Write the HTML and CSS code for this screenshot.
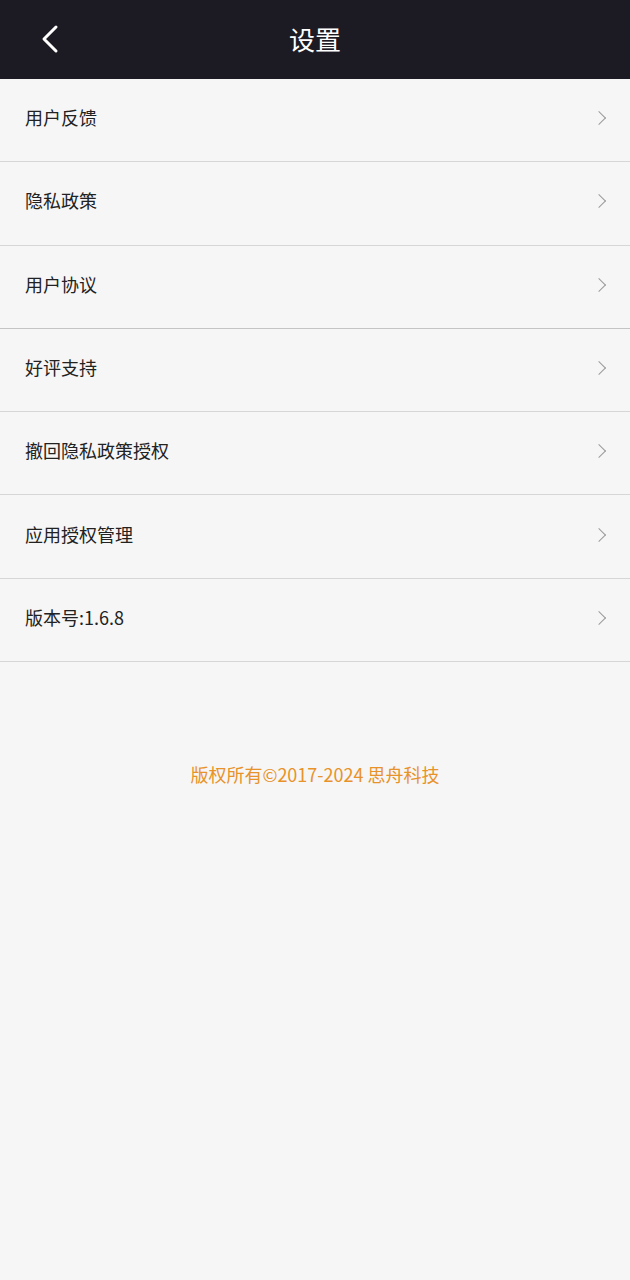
FILE: index.html
```html
<!DOCTYPE html>
<html>
<head>
  <meta charset="utf-8">
  <title>设置</title>
  <link rel="stylesheet" href="styles.css">
</head>
<body>
  <div class="header">
    <a class="back" href="#">
      <svg width="20" height="30" viewBox="0 0 20 30">
        <polyline points="16,3 4,15 16,27" fill="none" stroke="#fff" stroke-width="3" stroke-linecap="round" stroke-linejoin="round"/>
      </svg>
    </a>
    <h1>设置</h1>
  </div>

  <ul class="menu">
    <li class="item"><span>用户反馈</span><i class="arrow"></i></li>
    <li class="item"><span>隐私政策</span><i class="arrow"></i></li>
    <li class="item strong"><span>用户协议</span><i class="arrow"></i></li>
    <li class="item"><span>好评支持</span><i class="arrow"></i></li>
    <li class="item"><span>撤回隐私政策授权</span><i class="arrow"></i></li>
    <li class="item"><span>应用授权管理</span><i class="arrow"></i></li>
    <li class="item"><span>版本号:1.6.8</span><i class="arrow"></i></li>
  </ul>

  <p class="copyright">版权所有©2017-2024 思舟科技</p>
</body>
</html>
```

FILE: styles.css
```css
body {
  margin: 0;
  background: #f6f6f6;
  font-family: "Noto Sans CJK SC", "Noto Sans", sans-serif;
  color: #222;
}
.header {
  box-sizing: border-box;
  height: 79px;
  padding-bottom: 2px;
  background: #1c1b24;
  display: flex;
  align-items: center;
  justify-content: center;
  position: relative;
}
.header h1 {
  margin: 0;
  font-size: 26px;
  font-weight: normal;
  color: #fff;
}
.back {
  position: absolute;
  left: 40px;
  top: 24px;
  display: block;
  line-height: 0;
}
.menu {
  list-style: none;
  margin: 0;
  padding: 0;
}
.item {
  box-sizing: border-box;
  height: 83.3px;
  padding: 0 26px 6px 25px;
  display: flex;
  align-items: center;
  justify-content: space-between;
  border-bottom: 1px solid #d6d6d6;
  font-size: 18px;
}
.item.strong {
  border-bottom-color: #c4c4c4;
}
.arrow {
  width: 9px;
  height: 9px;
  border-top: 1.3px solid #9a9a9a;
  border-right: 1.3px solid #9a9a9a;
  transform: rotate(45deg);
  margin-top: 2px;
}
.copyright {
  margin: 99px 0 0;
  text-align: center;
  font-size: 18px;
  color: #e8922a;
}
```
